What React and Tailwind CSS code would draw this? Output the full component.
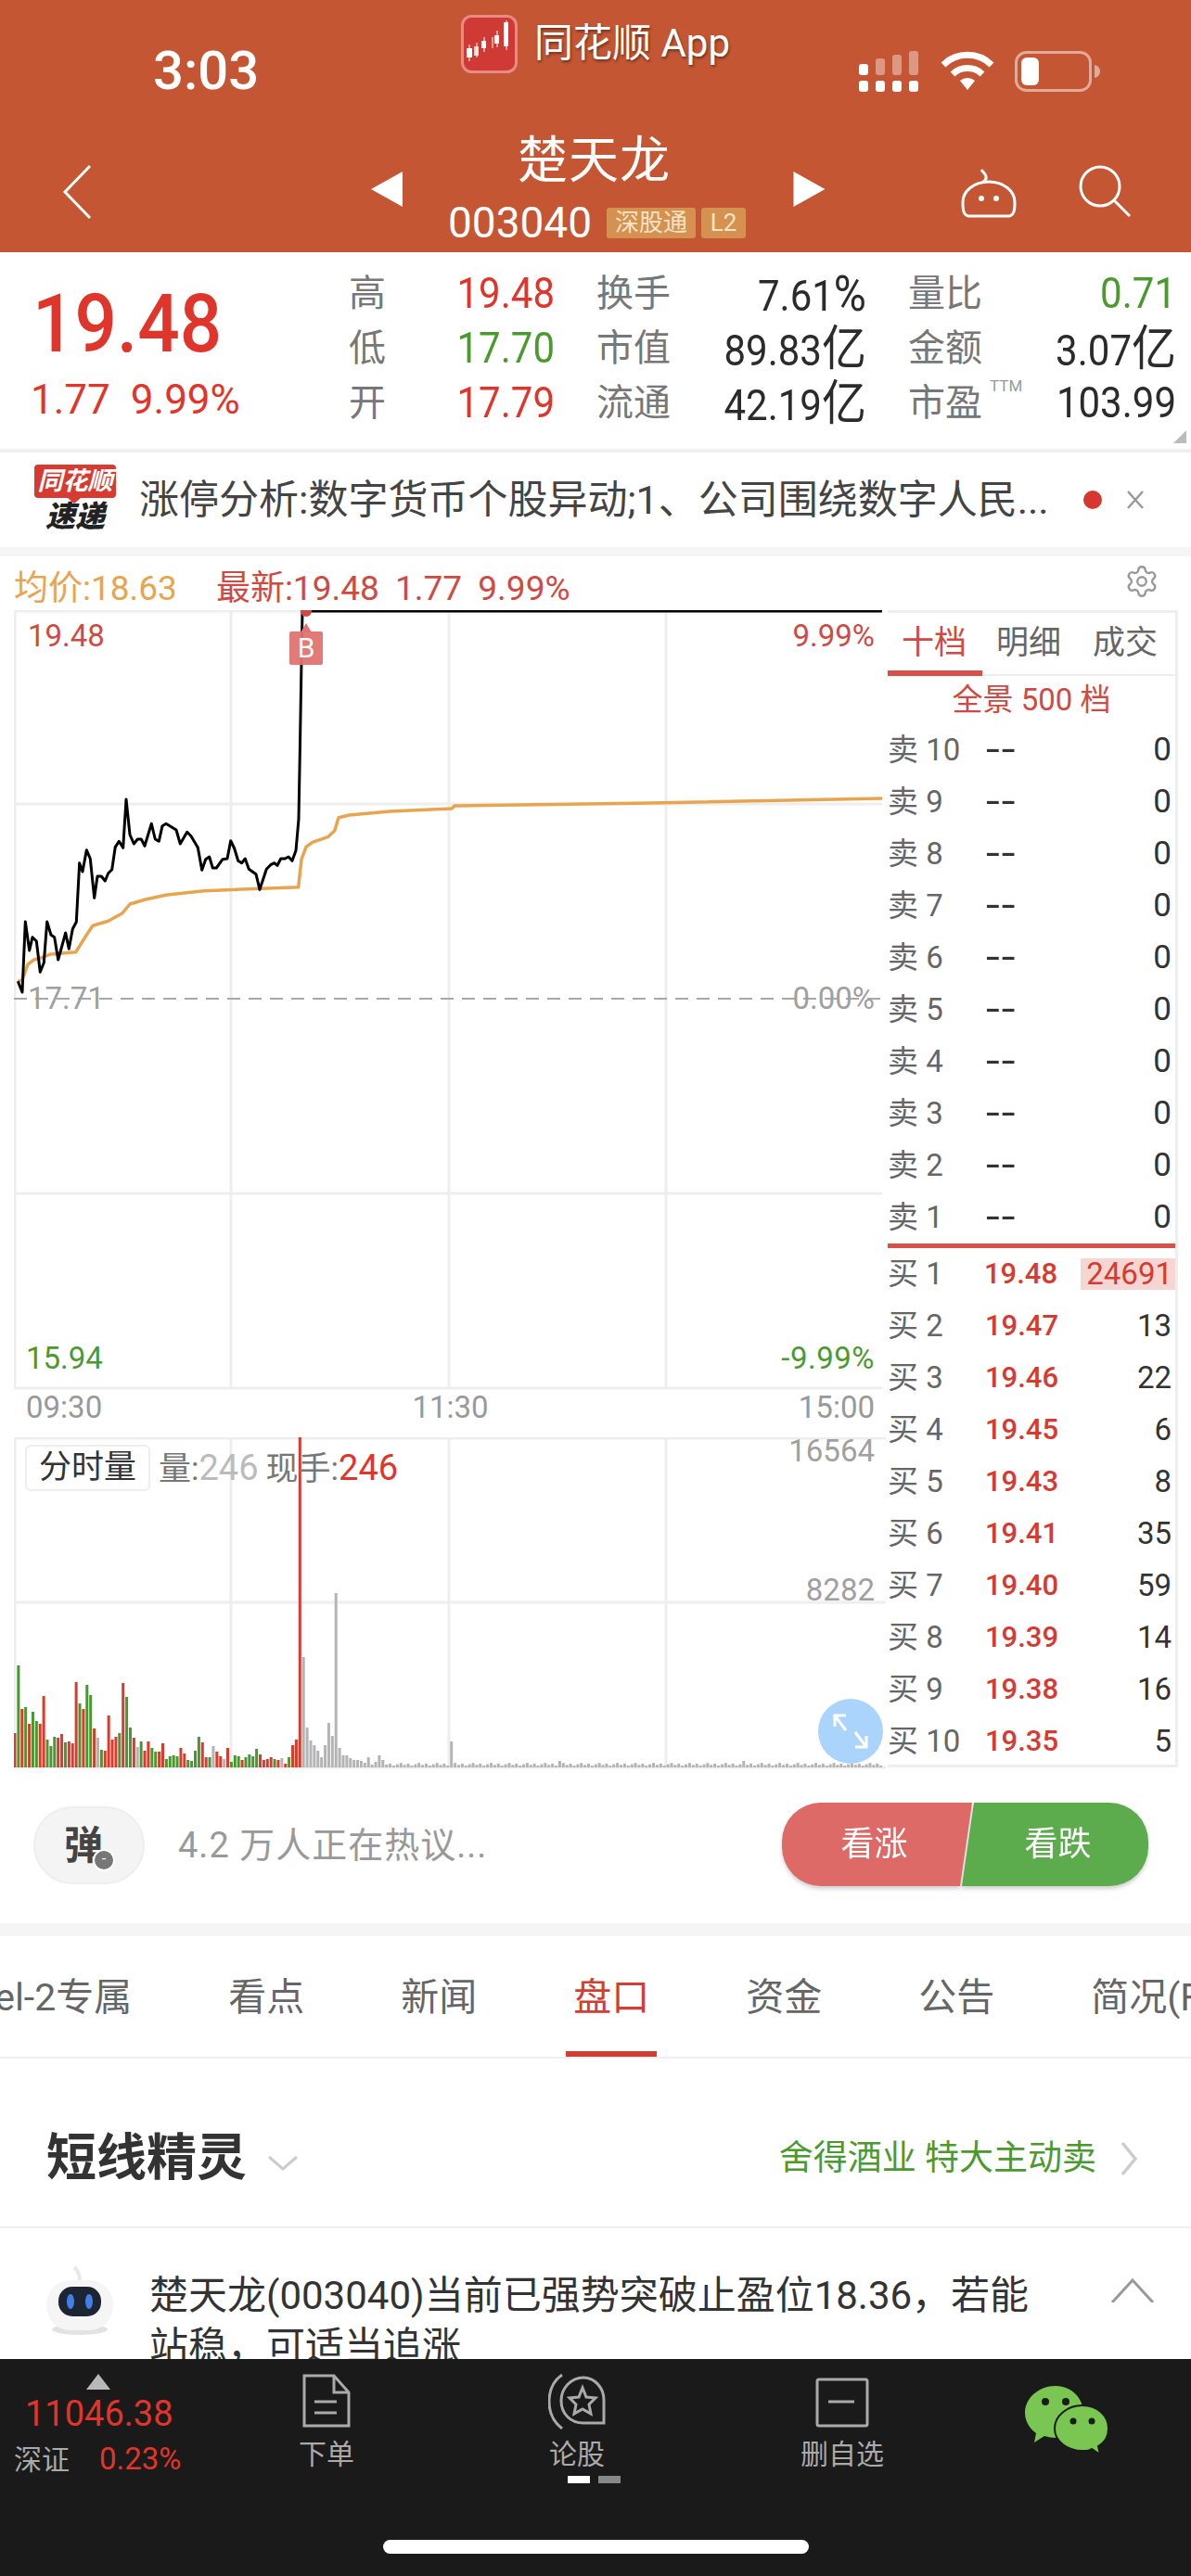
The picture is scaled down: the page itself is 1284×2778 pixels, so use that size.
import React from 'react';
import { Settings } from 'lucide-react';

// zoomed trace of the intraday price, x/3 and 680+y/3 give page coordinates
const priceTrace = [[58,1135],[72,1170],[82,942],[95,1035],[105,992],[118,1005],[130,1105],[142,1075],[152,942],[165,985],[176,992],[188,1065],[212,978],[223,1030],[235,965],[247,943],[257,752],[267,780],[280,710],[292,738],[305,865],[315,795],[328,795],[340,810],[350,785],[362,773],[373,700],[385,682],[398,703],[408,546],[420,660],[433,690],[445,675],[457,675],[468,697],[490,625],[502,675],[514,682],[525,632],[537,625],[570,645],[583,690],[605,652],[618,665],[640,702],[653,775],[665,740],[677,732],[688,768],[700,768],[720,740],[735,738],[746,680],[758,705],[770,745],[782,752],[793,738],[805,772],[828,788],[840,838],[862,772],[875,758],[887,752],[897,760],[908,738],[922,738],[933,732],[945,745],[957,712],[966,610],[970,400],[975,100],[978,-63]];
const avgTrace = [[58,1135],[72,1130],[90,1080],[110,1065],[130,1060],[160,1048],[245,1040],[280,985],[300,955],[350,940],[395,915],[420,885],[470,870],[540,855],[660,842],[965,830],[975,740],[990,700],[1010,685],[1060,668],[1082,648],[1095,605],[1130,597],[1260,585]];
const toPoints = (trace) => trace.map(([x, y]) => `${(x / 3).toFixed(1)},${(680 + y / 3).toFixed(1)}`).join(' ');

const barColors = { r: '#dc3a2c', g: '#4a9632', n: '#b4b4b4' };
const headBars = 'r37 g110 r63 g65 r47 g60 g50 r47 r77 g30 g23 g33 r32 r36 g27 r28 r26 r92 g69 r63 g89 g78 r42 n32 g19 r18 r56 r30 r33 g37 r91 g76 g43 r32 n22 g28 r18 r28 g21 g17 r17 r26 g9 g12 g13 g12 r21 r15 g8 g7 g18 g33 r27 r11 g11 n23 r17 r12 n9 r21 g6 g13 g12 r8 g11 g14 g12 g20 r14 r8 r9 r11 g9 r8 n10 r4 g11 r24 r30 r356 n119 n43 n29 n24 n18 n11 n24 n48 n34 n188 n21 n13 n13 n10 n8 n8 n7 n5 n11 n3 n6 n13 n8 n3'
  .split(' ')
  .map((s) => [s[0], Number(s.slice(1))]);
const bars = Array.from({ length: 241 }, (_, i) => {
  if (i < headBars.length) return headBars[i];
  if (i === 121) return ['n', 28];
  if (i === 151 || i === 202) return ['n', 7];
  return ['n', 2 + ((i * 7) % 5) * 0.7];
});

const asks = ['卖 10', '卖 9', '卖 8', '卖 7', '卖 6', '卖 5', '卖 4', '卖 3', '卖 2', '卖 1'];
const bids = [
  ['买 1', '19.48', '24691'], ['买 2', '19.47', '13'], ['买 3', '19.46', '22'], ['买 4', '19.45', '6'], ['买 5', '19.43', '8'],
  ['买 6', '19.41', '35'], ['买 7', '19.40', '59'], ['买 8', '19.39', '14'], ['买 9', '19.38', '16'], ['买 10', '19.35', '5'],
];

const adviceFirst = '楚天龙(003040)当前已强势突破止盈位18.36\uFF0C若能';
const adviceSecond = '站稳\uFF0C可适当追涨';

const Stat = ({ label, value, unit, color = 'text-[#2b2b2b]', sup }) => (
  <div className="flex items-center justify-between h-[59px]">
    <span className="relative text-[40px] leading-none text-[#777]">
      {label}
      {sup && <span className="absolute left-[88px] -top-[7px] text-[17px] text-[#999]">{sup}</span>}
    </span>
    <span className={`inline-block scale-y-110 text-[42px] leading-none whitespace-nowrap ${color}`}>
      {value}
      {unit && <span className="text-[48px]">{unit}</span>}
    </span>
  </div>
);

const Header = () => (
  <div className="h-[272px] bg-[#c45633] text-white shrink-0">
    <div className="grid grid-cols-[1fr_auto_1fr] h-[120px]">
      <div className="pl-[165px] pt-[50px] text-[58px] leading-[52px] font-medium">3:03</div>
      <div className="flex items-center gap-[18px] pt-[15px] self-start">
        <svg width="61" height="63" viewBox="0 0 61 63">
          <rect x="1.5" y="1.5" width="58" height="60" rx="10" fill="#cf3a34" stroke="#e88b86" strokeWidth="3" />
          <g fill="#fff">
            <rect x="6" y="36" width="6" height="10" /><rect x="14" y="34" width="5" height="10" opacity=".8" />
            <rect x="22" y="28" width="5" height="8" /><rect x="36" y="22" width="5" height="9" /><rect x="46" y="8" width="5" height="26" />
          </g>
          <path d="M9 32v18M17 30v16M25 24v16M34 24v12M39 17v18M49 6v32" stroke="#fff" strokeWidth="1" />
        </svg>
        <span className="text-[42px] leading-[64px] [text-shadow:1px_2px_3px_rgba(0,0,0,0.45)]">同花顺 App</span>
      </div>
      <div className="flex justify-end items-start gap-[22px] pr-[98px] pt-[55px]">
        <svg width="66" height="44" viewBox="0 0 66 44">
          <g fill="#fff">
            <rect x="0" y="14" width="10" height="12" rx="3" /><rect x="0" y="32" width="10" height="12" rx="3" />
            <rect x="18" y="32" width="10" height="12" rx="3" /><rect x="36" y="32" width="10" height="12" rx="3" /><rect x="54" y="32" width="10" height="12" rx="3" />
          </g>
          <g fill="#fff" opacity=".4">
            <rect x="18" y="8" width="10" height="18" rx="3" /><rect x="36" y="4" width="10" height="22" rx="3" /><rect x="54" y="0" width="10" height="26" rx="3" />
          </g>
        </svg>
        <svg width="58" height="44" viewBox="0 0 58 44" fill="none" stroke="#fff" strokeWidth="7">
          <path d="M3 15a37 37 0 0 1 52 0" />
          <path d="M13 25a23 23 0 0 1 32 0" />
          <path d="M29 42l-8-10a12 12 0 0 1 16 0z" fill="#fff" stroke="none" />
        </svg>
        <svg width="92" height="44" viewBox="0 0 92 44" fill="none">
          <rect x="1.5" y="1.5" width="80" height="41" rx="11" stroke="#fff" strokeOpacity=".5" strokeWidth="3" />
          <rect x="7" y="7" width="19" height="30" rx="6" fill="#fff" />
          <path d="M86 15c4 1 6 4 6 7s-2 6-6 7z" fill="#fff" fillOpacity=".5" />
        </svg>
      </div>
    </div>
    <div className="grid grid-cols-[1fr_auto_1fr] h-[152px]">
      <div className="pl-[67px] pt-[57px]">
        <svg width="32" height="60" viewBox="0 0 32 60" fill="none" stroke="#fff" strokeWidth="3">
          <path d="M30 2L3 30l27 28" />
        </svg>
      </div>
      <div className="flex items-center pt-[16px] ml-[6px]">
        <svg width="34" height="38" viewBox="0 0 34 38"><path d="M34 0v38L0 19z" fill="#fff" /></svg>
        <div className="flex flex-col items-center w-[329px] ml-[42px] mr-[50px]">
          <div className="text-[54px] leading-[60px] tracking-[1px]">楚天龙</div>
          <div className="flex items-center gap-[16px] mt-[12px] ml-[6px] whitespace-nowrap">
            <span className="text-[46px] leading-[48px]">003040</span>
            <span className="flex gap-[6px]">
              <span className="h-[33px] w-[96px] rounded-[3px] bg-[#d4914f] text-[26px] leading-[33px] text-center text-[#f7e3c8]">深股通</span>
              <span className="h-[33px] w-[48px] rounded-[3px] bg-[#d4914f] text-[26px] leading-[33px] text-center text-[#f7e3c8]">L2</span>
            </span>
          </div>
        </div>
        <svg width="35" height="38" viewBox="0 0 34 38"><path d="M0 0v38l34-19z" fill="#fff" /></svg>
      </div>
      <div className="flex justify-end gap-[66px] pr-[65px] pt-[58px]">
        <svg width="62" height="58" viewBox="0 0 62 58" fill="none" stroke="#fff" strokeWidth="3">
          <path d="M25 18c3-2 4-5 2-8s-3-3-4-5" />
          <path d="M31 18c16 0 28 10 28 22 0 6 0 14-6 15H9c-6-1-6-9-6-15 0-12 12-22 28-22z" />
          <circle cx="23" cy="36" r="3" fill="#fff" stroke="none" /><circle cx="39" cy="36" r="3" fill="#fff" stroke="none" />
        </svg>
        <svg width="56" height="56" viewBox="0 0 56 56" fill="none" stroke="#fff" strokeWidth="3">
          <circle cx="23" cy="23" r="21" /><path d="M38 38l17 17" />
        </svg>
      </div>
    </div>
  </div>
);

const Quote = () => (
  <div className="h-[216px] shrink-0 border-b-[4px] border-[#f0f0f0] flex relative">
    <div className="w-[376px] pl-[35px] pt-[29px]">
      <div className="inline-block scale-y-110 text-[80px] leading-[96px] font-medium text-[#e0352b]">19.48</div>
      <div className="text-[44px] leading-[50px] text-[#e0352b] mt-[9px] -ml-[2px] flex gap-[22px]"><span>1.77</span><span>9.99%</span></div>
    </div>
    <div className="grid grid-cols-[222px_291px_289px] grid-rows-[59px_59px_59px] gap-x-[45px] pt-[15px] h-fit">
      <Stat label="高" value="19.48" color="text-[#e0352b]" />
      <Stat label="换手" value="7.61" unit="%" />
      <Stat label="量比" value="0.71" color="text-[#4a9a30]" />
      <Stat label="低" value="17.70" color="text-[#4a9a30]" />
      <Stat label="市值" value="89.83" unit="亿" />
      <Stat label="金额" value="3.07" unit="亿" />
      <Stat label="开" value="17.79" color="text-[#e0352b]" />
      <Stat label="流通" value="42.19" unit="亿" />
      <Stat label="市盈" value="103.99" sup="TTM" />
    </div>
    <div className="absolute right-[5px] bottom-[6px] w-0 h-0 border-l-[14px] border-b-[14px] border-l-transparent border-b-[#bbb]" />
  </div>
);

const NewsBar = () => (
  <div className="h-[102px] shrink-0 flex items-center pl-[37px] pr-[50px]">
    <div className="w-[88px] h-[76px] flex flex-col items-center">
      <div className="relative w-[88px] h-[36px] rounded-[4px] bg-[#d63a30] text-white text-[27px] leading-[36px] font-bold italic text-center whitespace-nowrap">
        同花顺
        <span className="absolute left-[36px] top-[36px] w-0 h-0 border-x-[7px] border-t-[6px] border-x-transparent border-t-[#d63a30]" />
      </div>
      <div className="text-[32px] leading-[40px] font-black italic text-[#222]">速递</div>
    </div>
    <div className="ml-[25px] flex-1 text-[43px] leading-[50px] text-[#444] whitespace-nowrap">涨停分析:数字货币个股异动;1、公司围绕数字人民...</div>
    <div className="w-[20px] h-[20px] rounded-full bg-[#d6372f]" />
    <svg width="20" height="22" viewBox="0 0 20 22" className="ml-[26px]" fill="none" stroke="#999" strokeWidth="2.5"><path d="M2 2l16 18M18 2L2 20" /></svg>
  </div>
);

const PriceChart = () => (
  <div className="relative h-[842px]">
    <svg width="942" height="842" viewBox="15 658 942 842" className="block">
      <g stroke="#eeeeee" strokeWidth="3" fill="none">
        <path d="M16 658V1498M249 658V1498M484 658V1498M718 658V1498M15 659H951M15 867H951M15 1287H951M15 1497H951" />
      </g>
      <path d="M15 1077H951" stroke="#a8a8a8" strokeWidth="2" strokeDasharray="14 9" />
      <polyline points={toPoints(avgTrace) + ' 487,872 490,869 700,866 951,861'} fill="none" stroke="#e8a550" strokeWidth="3.5" strokeLinejoin="round" />
      <polyline points={toPoints(priceTrace) + ' 951,659'} fill="none" stroke="#000" strokeWidth="3" strokeLinejoin="round" />
      <circle cx="330" cy="659" r="6" fill="#d04a44" />
      <path d="M330 672l6 10h-12z" fill="#e07470" />
      <rect x="312" y="681" width="36" height="36" rx="2" fill="#e07470" fillOpacity=".95" />
    </svg>
    <span className="absolute left-[297px] w-[36px] top-[23px] text-center text-[30px] leading-[36px] text-white">B</span>
    <span className="absolute left-[15px] top-[10px] text-[33px] leading-[36px] text-[#cf4a43]">19.48</span>
    <span className="absolute right-[14px] top-[10px] text-[33px] leading-[36px] text-[#cf4a43]">9.99%</span>
    <span className="absolute left-[15px] top-[401px] text-[33px] leading-[36px] text-[#a0a0a0]">17.71</span>
    <span className="absolute right-[14px] top-[401px] text-[33px] leading-[36px] text-[#a0a0a0]">0.00%</span>
    <span className="absolute left-[13px] top-[789px] text-[33px] leading-[36px] text-[#4a9a30]">15.94</span>
    <span className="absolute right-[14px] top-[789px] text-[33px] leading-[36px] text-[#4a9a30] tracking-[0.5px]">-9.99%</span>
  </div>
);

const VolumeChart = () => (
  <div className="relative h-[358px] mt-[8px]">
    <svg width="942" height="358" viewBox="15 1550 942 358" className="block">
      <path d="M16 1550V1906M249 1550V1906M484 1550V1906M718 1550V1906M15 1551H955M15 1728H955M15 1906H955" stroke="#eeeeee" strokeWidth="3" fill="none" />
      {bars.map(([c, h], i) => (
        <rect key={i} x={14.5 + i * 3.89} y={1906 - h} width="3" height={h} fill={barColors[c]} />
      ))}
    </svg>
    <div className="absolute left-[12px] top-[8px] flex items-center whitespace-nowrap">
      <span className="h-[50px] px-[13px] rounded-[6px] border-[2px] border-[#eee] text-[35px] leading-[46px] text-[#333] bg-white">分时量</span>
      <span className="ml-[9px] text-[35px] leading-none text-[#777]">量:<span className="text-[38px] text-[#bbb]">246</span><span className="ml-[8px]">现手:</span><span className="text-[38px] text-[#e0352b]">246</span></span>
    </div>
    <span className="absolute right-[14px] top-[-3px] text-[33px] leading-[36px] text-[#a0a0a0]">16564</span>
    <span className="absolute right-[14px] top-[147px] text-[33px] leading-[36px] text-[#a0a0a0]">8282</span>
    <div className="absolute left-[867px] top-[282px] w-[70px] h-[70px] rounded-full bg-[#aad4fb] flex items-center justify-center">
      <svg width="40" height="40" viewBox="0 0 40 40" fill="none" stroke="#fff" strokeWidth="3">
        <path d="M3 15V3h12M3 3l12 16M37 25v12H25M37 37L25 21" />
      </svg>
    </div>
  </div>
);

const OrderBook = () => (
  <div className="w-[313px] h-[1248px] border-t-[3px] border-r-[3px] border-b-[3px] border-[#eeeeee]">
    <div className="h-[68px] flex border-b-[2px] border-[#eee] relative">
      <span className="w-[100px] text-center text-[35px] leading-[66px] text-[#cf4a43]">十档</span>
      <span className="w-[104px] text-center text-[35px] leading-[66px] text-[#666]">明细</span>
      <span className="w-[104px] text-center text-[35px] leading-[66px] text-[#666]">成交</span>
      <span className="absolute left-0 bottom-[-2px] w-[102px] h-[6px] bg-[#d9504a]" />
    </div>
    <div className="h-[52px] text-center text-[33px] leading-[52px] text-[#cf4a43]">全景 500 档</div>
    {asks.map((a) => (
      <div key={a} className="h-[56px] flex items-center text-[33px]">
        <span className="w-[105px] text-[#666] whitespace-nowrap">{a}</span>
        <span className="inline-block scale-x-150 origin-left text-[#333] font-medium">--</span>
        <span className="flex-1 text-right pr-[4px] text-[35px] text-[#333]">0</span>
      </div>
    ))}
    <div className="h-[5px] bg-[#d9504a]" />
    {bids.map(([label, price, vol]) => (
      <div key={label} className="h-[56px] flex items-center text-[33px]">
        <span className="w-[105px] text-[#666] whitespace-nowrap">{label}</span>
        <span className="w-[105px] text-[31px] font-medium text-[#d63a30]">{price}</span>
        <span className="flex-1 flex justify-end">
          <span className={label === '买 1' ? 'bg-[#f6d6d3] text-[#d63a30] pr-[3px] h-[34px] leading-[34px] w-[102px] text-right' : 'mr-[4px] text-[#333]'}>{vol}</span>
        </span>
      </div>
    ))}
  </div>
);

const ChartSection = () => (
  <div className="shrink-0 h-[1305px]">
    <div className="h-[58px] flex items-center pl-[15px] pr-[34px] pt-[10px] text-[37px] leading-none">
      <span className="text-[#e8a550]">均价:18.63</span>
      <span className="ml-[42px] text-[#cf4a43] [word-spacing:8px]">最新:19.48 1.77 9.99%</span>
      <Settings size={38} strokeWidth={1.5} className="ml-auto -mt-[14px] text-[#999]" />
    </div>
    <div className="flex pl-[15px]">
      <div className="w-[942px]">
        <PriceChart />
        <div className="flex justify-between pl-[13px] pr-[14px] text-[33px] leading-[36px] text-[#999] h-[42px]">
          <span>09:30</span><span>11:30</span><span>15:00</span>
        </div>
        <VolumeChart />
      </div>
      <OrderBook />
    </div>
  </div>
);

const ActionRow = () => (
  <div className="h-[183px] shrink-0 flex items-start pl-[36px] pr-[46px] border-b-[14px] border-[#f5f5f5]">
    <div className="relative w-[120px] h-[84px] mt-[43px] rounded-[42px] bg-[#f4f4f4] border-[2px] border-[#eee] flex items-center justify-center">
      <span className="text-[42px] font-bold text-[#444] -ml-[12px]">弹</span>
      <span className="absolute left-[62px] top-[44px] w-[24px] h-[24px] rounded-full bg-[#777] border-[2px] border-white text-white text-[16px] leading-[18px] text-center">-</span>
    </div>
    <div className="ml-[36px] mt-[66px] text-[38px] leading-[38px] tracking-[1px] text-[#999]">4.2 万人正在热议...</div>
    <div className="ml-auto mt-[39px] flex w-[395px] h-[90px] drop-shadow-[0_3px_2px_rgba(120,120,120,0.35)]">
      <div className="w-[205px] h-[90px] shrink-0 bg-[#dd6a66] rounded-l-[42px] [clip-path:polygon(0_0,100%_0,calc(100%-13px)_100%,0_100%)] text-white text-[36px] leading-[90px] text-center pr-[6px]">看涨</div>
      <div className="w-[201px] h-[90px] shrink-0 -ml-[11px] bg-[#5cac4e] rounded-r-[42px] [clip-path:polygon(13px_0,100%_0,100%_100%,0_100%)] text-white text-[36px] leading-[90px] text-center pl-[6px]">看跌</div>
    </div>
  </div>
);

const tabs = ['Level-2专属', '看点', '新闻', '盘口', '资金', '公告', '简况(F10)'];

const Tabs = () => (
  <div className="h-[132px] shrink-0 flex items-center gap-[104px] -ml-[69px] whitespace-nowrap border-b-[2px] border-[#f0f0f0] w-[1400px] overflow-hidden">
    {tabs.map((t) => (
      <div key={t} className={`relative h-[130px] leading-[132px] text-[41px] ${t === '盘口' ? 'text-[#cf3f37]' : 'text-[#666]'}`}>
        {t}
        {t === '盘口' && <span className="absolute left-[-8px] right-[-8px] bottom-0 h-[6px] bg-[#cf3f37]" />}
      </div>
    ))}
  </div>
);

const Advice = () => (
  <div className="flex-1 min-h-0 overflow-hidden">
    <div className="h-[183px] flex items-center pl-[50px] pr-[57px] pt-[34px] border-b-[2px] border-[#eeeeee]">
      <span className="text-[54px] leading-none font-bold text-[#333]">短线精灵</span>
      <svg width="34" height="18" viewBox="0 0 34 18" className="ml-[22px] mt-[10px]" fill="none" stroke="#ccc" strokeWidth="3"><path d="M2 2l15 13L32 2" /></svg>
      <span className="ml-auto text-[37px] leading-none text-[#4a9a30]">舍得酒业 特大主动卖</span>
      <svg width="20" height="38" viewBox="0 0 20 38" className="ml-[25px]" fill="none" stroke="#ccc" strokeWidth="3.5"><path d="M3 2l14 17L3 36" /></svg>
    </div>
    <div className="flex pl-[49px] pt-[38px]">
      <svg width="74" height="78" viewBox="0 0 74 78" className="shrink-0">
        <path d="M34 22c5-5 3-12-3-18" fill="none" stroke="#e8e8e8" strokeWidth="4" />
        <ellipse cx="37" cy="71" rx="30" ry="6" fill="#e2e2e2" />
        <rect x="1" y="18" width="72" height="54" rx="26" fill="#f5f5f5" />
        <rect x="14" y="25" width="46" height="32" rx="15" fill="#1d2434" />
        <ellipse cx="27" cy="41" rx="4" ry="8" fill="#3f7fe6" /><ellipse cx="47" cy="41" rx="4" ry="8" fill="#3f7fe6" />
      </svg>
      <div className="ml-[38px] mt-[7px] w-[960px] text-[42px] leading-[55px] text-[#333] whitespace-nowrap">{adviceFirst}<br />{adviceSecond}</div>
      <svg width="48" height="26" viewBox="0 0 48 26" className="ml-[76px] mt-[16px] shrink-0" fill="none" stroke="#999" strokeWidth="3"><path d="M2 26L24 2l22 24" /></svg>
    </div>
  </div>
);

const BottomBar = () => (
  <div className="h-[234px] shrink-0 bg-[#1a1a1a] relative flex">
    <div className="w-[297px] pl-[15px] pt-[16px]">
      <div className="ml-[78px] w-0 h-0 border-x-[13px] border-b-[17px] border-x-transparent border-b-[#b8b8b8]" />
      <div className="ml-[12px] mt-[4px] text-[38px] leading-[44px] text-[#e0352b]">11046.38</div>
      <div className="mt-[7px] flex items-baseline">
        <span className="text-[30px] leading-[40px] text-[#aaa]">深证</span>
        <span className="ml-[32px] text-[33px] leading-[40px] text-[#e0352b]">0.23%</span>
      </div>
    </div>
    <div className="w-[110px] flex flex-col items-center pt-[16px] text-[#aaa]">
      <svg width="52" height="58" viewBox="0 0 52 58" fill="none" stroke="#aaa" strokeWidth="3">
        <path d="M2 2h32l16 18v36H2z" /><path d="M34 2v18h16M13 30h24M13 42h24" />
      </svg>
      <span className="text-[30px] leading-[40px] mt-[9px]">下单</span>
    </div>
    <div className="w-[110px] ml-[160px] flex flex-col items-center pt-[16px]">
      <svg width="62" height="60" viewBox="0 0 62 60" fill="none" stroke="#aaa" strokeWidth="3">
        <path d="M15 1C5 8 1 18 1 30s5 22 14 29" />
        <path d="M38 4c12 0 22 11 22 24v25H38c-14 0-24-10-24-24S25 4 38 4z" />
        <path d="M37 15l4 10 10 1-7 7 2 10-9-5-9 5 2-10-7-7 10-1z" />
      </svg>
      <span className="text-[30px] leading-[40px] mt-[7px] text-[#aaa]">论股</span>
    </div>
    <div className="w-[110px] ml-[176px] flex flex-col items-center pt-[20px]">
      <svg width="58" height="54" viewBox="0 0 58 54" fill="none" stroke="#aaa" strokeWidth="3">
        <rect x="2" y="2" width="54" height="50" rx="2" /><path d="M14 26h28" />
      </svg>
      <span className="text-[30px] leading-[40px] mt-[9px] text-[#aaa] whitespace-nowrap">删自选</span>
    </div>
    <div className="ml-[142px] pt-[28px]">
      <svg width="92" height="76" viewBox="0 0 92 76">
        <path d="M33 1C15 1 0 14 0 30c0 9 5 17 12 22l-2 10 11-7c4 1 8 2 12 2 18 0 30-12 30-27S51 1 33 1z" fill="#79c653" />
        <path d="M62 22c-16 0-30 11-30 25s14 24 30 24c3 0 7 0 10-2l9 6-2-9c7-4 11-11 11-19 0-14-12-25-28-25z" fill="#79c653" stroke="#1a1a1a" strokeWidth="2" />
        <circle cx="22" cy="18" r="4" fill="#1a1a1a" /><circle cx="44" cy="18" r="4" fill="#1a1a1a" />
        <circle cx="52" cy="39" r="3.5" fill="#1a1a1a" /><circle cx="72" cy="39" r="3.5" fill="#1a1a1a" />
      </svg>
    </div>
    <div className="absolute left-[612px] top-[126px] flex gap-[9px]">
      <span className="w-[24px] h-[8px] bg-white" /><span className="w-[24px] h-[8px] bg-[#888]" />
    </div>
    <div className="absolute left-[413px] top-[195px] w-[459px] h-[15px] rounded-full bg-white" />
  </div>
);

const App = () => (
  <div className="w-[1284px] h-[2778px] overflow-hidden bg-white flex flex-col font-['Roboto','Noto_Sans_CJK_SC',sans-serif]">
    <Header />
    <Quote />
    <NewsBar />
    <div className="h-[10px] shrink-0 bg-[#f5f5f5]" />
    <ChartSection />
    <ActionRow />
    <Tabs />
    <Advice />
    <BottomBar />
  </div>
);

export default App;
